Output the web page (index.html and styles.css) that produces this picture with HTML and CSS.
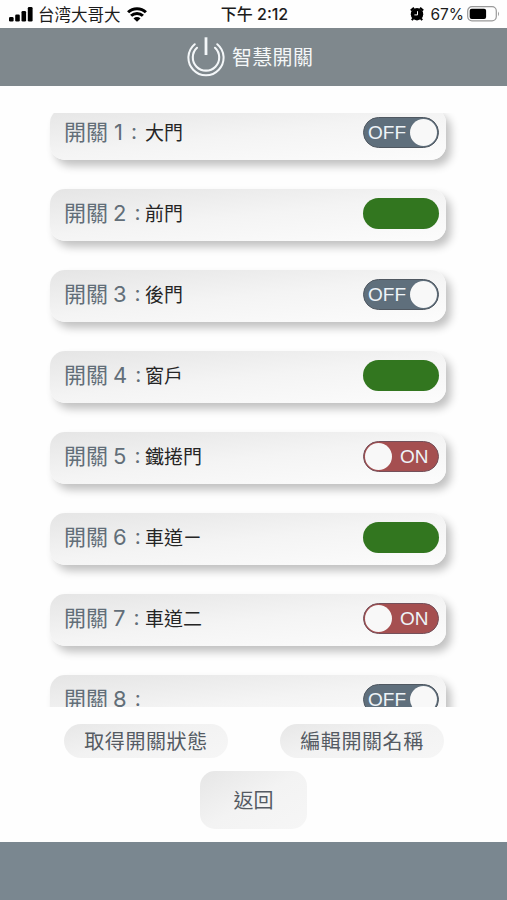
FILE: index.html
```html
<!DOCTYPE html>
<html lang="zh-Hant">
<head>
<meta charset="utf-8">
<meta name="viewport" content="width=device-width, initial-scale=1">
<title>智慧開關</title>
<link rel="stylesheet" href="styles.css">
</head>
<body>
<div class="screen">
  <div class="status">
    <div class="status-left">
      <svg class="signal" viewBox="0 0 24 15"><rect x="0" y="10" width="4.6" height="4.5" rx="1.3"/><rect x="6.2" y="7.5" width="4.6" height="7" rx="1.3"/><rect x="12.5" y="4" width="4.6" height="10.5" rx="1.3"/><rect x="18.8" y="0" width="4.8" height="14.5" rx="1.3"/></svg>
      <span class="carrier">台湾大哥大</span>
      <svg class="wifi" viewBox="0 0 20 15"><path d="M10 14.7 6.5 11.4a4.9 4.9 0 0 1 7 0Z"/><path d="M4.1 8.8a8.4 8.4 0 0 1 11.8 0M1.1 5.3a12.7 12.7 0 0 1 17.8 0" fill="none" stroke="#000" stroke-width="3"/></svg>
    </div>
    <div class="clock">下午 2:12</div>
    <div class="status-right">
      <svg class="alarm" viewBox="0 0 14 14"><circle cx="7" cy="7.2" r="6.2"/><path d="M.8 3.6 4 .8M13.2 3.6 10 .8M3.2 11.5 1.8 13.2M10.8 11.5l1.4 1.7" stroke="#000" stroke-width="2"/><path d="M7.5 4.2v3.7H4.4" fill="none" stroke="#fff" stroke-width="1"/></svg>
      <span class="percent">67%</span>
      <svg class="battery" viewBox="0 0 33 16"><rect x=".7" y=".7" width="28.6" height="14.2" rx="4.3" fill="none" stroke="#999" stroke-width="1.2"/><rect x="2.7" y="2.7" width="16.4" height="10.2" rx="2"/><path d="M31 5.5q2 2.3 0 4.8z" fill="#999"/></svg>
    </div>
  </div>

  <header class="header">
    <svg class="power" viewBox="0 0 38 40" fill="none" stroke="#f4f7f9" stroke-linecap="round"><path d="M19 .3V18" stroke-width="2.8" stroke-linecap="butt"/><path d="M7.7 7.2a17.6 17.6 0 1 0 22.6 0" stroke-width="2"/><path d="M10 10.8a13.2 13.2 0 1 0 18 0" stroke-width="2.1"/></svg>
    <h1 class="title">智慧開關</h1>
  </header>

  <main class="list">
    <div class="row"><div class="label"><span class="word">開關</span><span class="num one">1</span><span class="colon">:</span></div><div class="name">大門</div><div class="switch off"><span>OFF</span><i class="knob"></i></div></div>
    <div class="row"><div class="label"><span class="word">開關</span><span class="num">2</span><span class="colon">:</span></div><div class="name">前門</div><div class="switch green"></div></div>
    <div class="row"><div class="label"><span class="word">開關</span><span class="num">3</span><span class="colon">:</span></div><div class="name">後門</div><div class="switch off"><span>OFF</span><i class="knob"></i></div></div>
    <div class="row"><div class="label"><span class="word">開關</span><span class="num">4</span><span class="colon">:</span></div><div class="name">窗戶</div><div class="switch green"></div></div>
    <div class="row"><div class="label"><span class="word">開關</span><span class="num">5</span><span class="colon">:</span></div><div class="name">鐵捲門</div><div class="switch on"><i class="knob"></i><span>ON</span></div></div>
    <div class="row"><div class="label"><span class="word">開關</span><span class="num">6</span><span class="colon">:</span></div><div class="name">車道ㄧ</div><div class="switch green"></div></div>
    <div class="row"><div class="label"><span class="word">開關</span><span class="num">7</span><span class="colon">:</span></div><div class="name">車道二</div><div class="switch on"><i class="knob"></i><span>ON</span></div></div>
    <div class="row"><div class="label"><span class="word">開關</span><span class="num">8</span><span class="colon">:</span></div><div class="name"></div><div class="switch off"><span>OFF</span><i class="knob"></i></div></div>
  </main>

  <div class="actions">
    <button class="pill">取得開關狀態</button>
    <button class="pill">編輯開關名稱</button>
  </div>
  <button class="back">返回</button>
  <footer class="footer"></footer>
</div>
</body>
</html>
```
FILE: styles.css
```css
* { box-sizing: border-box; }

body {
  margin: 0;
  background: #fefefe;
  font-family: "Noto Sans CJK TC", sans-serif;
}

.screen {
  display: flex;
  flex-direction: column;
  width: 507px;
  height: 900px;
  overflow: hidden;
}

.status {
  display: grid;
  grid-template-columns: 1fr auto 1fr;
  align-items: center;
  height: 28px;
  padding: 0 7px 0 9px;
  color: #1c1c1c;
}

.status-left, .status-right { display: flex; align-items: center; height: 28px; }
.status-right { justify-content: flex-end; }
.signal { width: 24px; height: 15px; margin-right: 5px; }
.carrier { font-size: 16.5px; line-height: 26px; }
.wifi { width: 20px; height: 15px; margin-left: 6px; }

.clock { font: 500 16px/28px Inter, "Noto Sans CJK TC", sans-serif; }

.alarm { width: 14px; height: 14px; margin-right: 6px; }
.percent { margin-right: 3px; padding-top: 1px; font: 15.5px/27px Inter, sans-serif; }
.battery { width: 33px; height: 16px; }

.header {
  display: flex;
  align-items: center;
  height: 58px;
  padding-left: 187px;
  background: #7f888d;
}

.power { width: 38px; height: 40px; }

.title {
  margin: 0 0 0 7px;
  color: #f4f7f8;
  font-size: 20px;
  font-weight: 400;
  line-height: 30px;
  letter-spacing: 0.3px;
}

.list {
  display: flex;
  flex-direction: column;
  justify-content: flex-end;
  gap: 29px;
  height: 594px;
  margin-top: 27px;
  padding: 0 61px 0 50px;
  overflow: hidden;
}

.row {
  display: flex;
  flex: none;
  align-items: center;
  height: 52px;
  padding: 0 7px 3px 15px;
  border-radius: 15px;
  background: linear-gradient(174deg, #e5e5e5 0%, #f4f4f4 50%, #fcfcfc 100%);
  box-shadow: 5px 6px 9px rgba(0, 0, 0, 0.24);
}

.list .row:last-child { margin-bottom: -20px; }

.label {
  display: flex;
  align-items: center;
  width: 80px;
  padding-bottom: 1px;
  color: #626e78;
  line-height: 30px;
}

.word { width: 48px; margin-left: -1px; padding-bottom: 4px; font-size: 22px; }
.num { margin-left: 1px; font-family: Inter, sans-serif; font-size: 22px; }
.one { padding-left: 1px; }
.colon { margin-left: 8px; font-family: Inter, sans-serif; font-size: 21px; }

.name { flex: 1; padding-bottom: 2px; color: #252525; font-size: 19px; line-height: 28px; }

.switch {
  display: flex;
  align-items: center;
  width: 76px;
  height: 31px;
  border-radius: 16px;
  color: #eef4f8;
  font: 19px/31px "Liberation Sans", sans-serif;
}

.off { padding-left: 4px; padding-right: 1px; justify-content: space-between; background: #5f6f7c; border: 1px solid #505861; }
.on { padding-left: 1px; background: #a54f50; border: 1px solid #74505a; }
.on span { margin-left: 8px; }
.green { background: #32761f; }
.knob { flex: none; width: 27px; height: 27px; border-radius: 50%; background: #f8f8f8; }

.actions {
  display: flex;
  justify-content: space-between;
  padding: 17px 63px 0 64px;
}

button {
  padding: 0;
  border: 0;
  color: #555b63;
  font: 20px/30px "Noto Sans CJK TC", sans-serif;
}

.pill {
  width: 164px;
  height: 34px;
  border-radius: 17px;
  background: linear-gradient(165deg, #e7e7e7, #f2f2f2 45%, #f6f6f6);
  letter-spacing: 0.6px;
}

.back {
  width: 107px;
  height: 58px;
  margin: 13px 0 0 200px;
  border-radius: 15px;
  background: linear-gradient(150deg, #e6e6e6, #f3f3f3 50%, #f6f6f6);
}

.footer { flex: 1; margin-top: 13px; background: #7a8790; }
```
